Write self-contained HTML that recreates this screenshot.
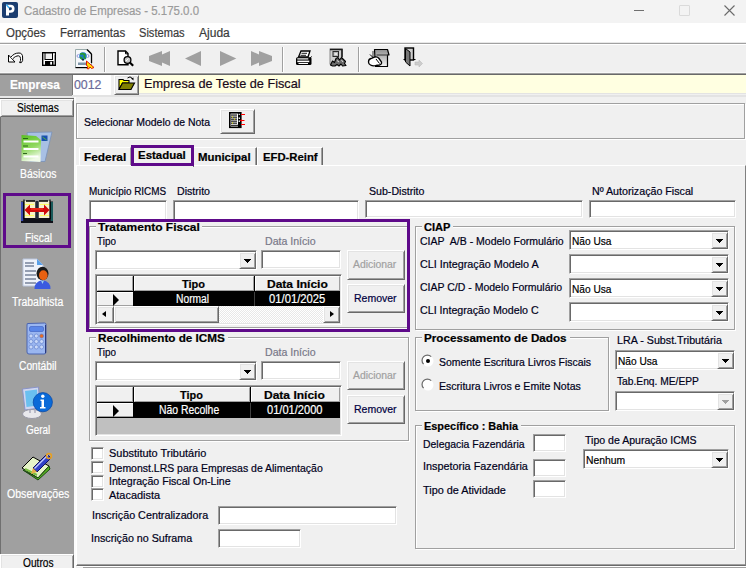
<!DOCTYPE html>
<html><head><meta charset="utf-8">
<style>
*{box-sizing:border-box;margin:0;padding:0}
html,body{width:746px;height:568px;overflow:hidden;background:#f0f0f0;font-family:"Liberation Sans",sans-serif;font-size:11px;color:#161650;position:relative}
.a{position:absolute}
.t{position:absolute;white-space:nowrap;-webkit-text-stroke:0.2px currentColor}
svg{position:absolute;overflow:visible}
</style></head><body>

<div class="a" style="left:0px;top:0px;width:746px;height:23px;background:#f3f3f3;"></div>
<svg style="left:2px;top:2px" width="16" height="16" viewBox="0 0 16 16"><rect x="0" y="0" width="16" height="16" rx="2" fill="#1b3d6f"/><path d="M4 2.7h4.5a4.05 4.05 0 0 1 0 8.1H7V13.6H4z M7 5.3v2.9h1.5a1.45 1.45 0 0 0 0-2.9z" fill="#fff"/><path d="M4.3 2.6l2.9 3.4" stroke="#3ab0f8" stroke-width="1.5"/></svg>
<div class="t" id="x1" style="left:24.00px;top:4.14px;font-size:12px;line-height:14px;color:#9b9b9b;transform:scaleX(0.9540);transform-origin:0 0;">Cadastro de Empresas - 5.175.0.0</div>
<div class="a" style="left:634px;top:10px;width:10px;height:1px;background:#6f6f6f;"></div>
<div class="a" style="left:679px;top:5px;width:11px;height:11px;border:1px solid #dadada;border-radius:1px"></div>
<svg style="left:724px;top:5px" width="11" height="11"><path d="M0.5 0.5L10.5 10.5M10.5 0.5L0.5 10.5" stroke="#6a6a6a" stroke-width="1.1"/></svg>
<div class="a" style="left:0px;top:23px;width:746px;height:19px;background:#ffffff;"></div>
<div class="t" id="x2" style="left:6.40px;top:25.54px;font-size:12px;line-height:14px;color:#3b3b3b;transform:scaleX(0.9550);transform-origin:0 0;">Opções</div>
<div class="t" id="x3" style="left:60.10px;top:25.54px;font-size:12px;line-height:14px;color:#3b3b3b;transform:scaleX(0.9584);transform-origin:0 0;">Ferramentas</div>
<div class="t" id="x4" style="left:139.20px;top:25.54px;font-size:12px;line-height:14px;color:#3b3b3b;transform:scaleX(0.9238);transform-origin:0 0;">Sistemas</div>
<div class="t" id="x5" style="left:199.00px;top:25.54px;font-size:12px;line-height:14px;color:#3b3b3b;transform:scaleX(1.0032);transform-origin:0 0;">Ajuda</div>
<div class="a" style="left:0px;top:42px;width:746px;height:1px;background:#e8e8e8;"></div>
<div class="a" style="left:0px;top:43px;width:746px;height:1px;background:#a0a0a0;"></div>
<div class="a" style="left:0px;top:44px;width:746px;height:1px;background:#ffffff;"></div>
<div class="a" style="left:0px;top:45px;width:746px;height:28px;background:#f0f0f0;"></div>
<div class="a" style="left:104px;top:47px;width:1px;height:26px;background:#a0a0a0;"></div>
<div class="a" style="left:105px;top:47px;width:1px;height:26px;background:#fff;"></div>
<div class="a" style="left:282px;top:47px;width:1px;height:26px;background:#a0a0a0;"></div>
<div class="a" style="left:283px;top:47px;width:1px;height:26px;background:#fff;"></div>
<div class="a" style="left:358px;top:47px;width:1px;height:26px;background:#a0a0a0;"></div>
<div class="a" style="left:359px;top:47px;width:1px;height:26px;background:#fff;"></div>
<div class="a" style="left:0px;top:72px;width:746px;height:1px;background:#f8f8f8;"></div>
<div class="a" style="left:0px;top:73px;width:746px;height:1px;background:#a0a0a0;"></div>
<div class="a" style="left:0px;top:74px;width:746px;height:1px;background:#696969;"></div>
<div class="a" style="left:0px;top:75px;width:72px;height:21px;background:#a0a0a0;"></div>
<div class="a" style="left:72px;top:75px;width:1px;height:20px;background:#7a7a7a;"></div>
<div class="t" id="x6" style="left:9.70px;top:76.80px;font-size:13px;line-height:15px;color:#ffffff;font-weight:bold;transform:scaleX(0.9067);transform-origin:0 0;">Empresa</div>
<div class="a" style="left:73px;top:75px;width:38px;height:20px;background:#ffffff;"></div>
<div class="t" id="x7" style="left:74.40px;top:76.80px;font-size:13px;line-height:15px;color:#6a6a9a;transform:scaleX(0.9508);transform-origin:0 0;">0012</div>
<div class="a" style="left:114px;top:75px;width:25px;height:20px;background:#f0f0f0;border:1px solid;border-color:#fff #696969 #696969 #fff;box-shadow:inset 1px 1px 0 #e3e3e3, inset -1px -1px 0 #a0a0a0"></div>
<div class="a" style="left:139px;top:75px;width:607px;height:18px;background:#ffffe1;"></div>
<div class="a" style="left:139px;top:93px;width:607px;height:1px;background:#e3e3e3;"></div>
<div class="t" id="x8" style="left:143.50px;top:75.50px;font-size:13px;line-height:15px;color:#1a0a1a;transform:scaleX(0.9777);transform-origin:0 0;">Empresa de Teste de Fiscal</div>
<div class="a" style="left:72px;top:95px;width:674px;height:2px;background:#e3e3e3;"></div>
<div class="a" style="left:0px;top:96px;width:74px;height:2px;background:#e8e8e8;"></div>
<div class="a" style="left:0px;top:98px;width:74px;height:470px;background:#a0a0a0;"></div>
<div class="a" style="left:0px;top:98px;width:1px;height:470px;background:#707070;"></div>
<div class="a" style="left:74px;top:97px;width:2px;height:471px;background:#fbfbfb;"></div>
<div class="a" style="left:0px;top:98px;width:74px;height:1px;background:#696969;"></div>
<div class="a" style="left:0px;top:99px;width:74px;height:18px;background:#f0f0f0;border:1px solid;border-color:#fff #696969 #696969 #fff;box-shadow:inset 1px 1px 0 #e3e3e3, inset -1px -1px 0 #a0a0a0"></div>
<div class="t" id="x9" style="left:16.60px;top:100.84px;font-size:12px;line-height:14px;color:#000;transform:scaleX(0.8469);transform-origin:0 0;">Sistemas</div>
<div class="t" id="x10" style="left:19.60px;top:166.84px;font-size:12px;line-height:14px;color:#fff;transform:scaleX(0.8684);transform-origin:0 0;">Básicos</div>
<div class="t" id="x11" style="left:24.60px;top:231.04px;font-size:12px;line-height:14px;color:#fff;transform:scaleX(0.8614);transform-origin:0 0;">Fiscal</div>
<div class="t" id="x12" style="left:12.10px;top:295.14px;font-size:12px;line-height:14px;color:#fff;transform:scaleX(0.8706);transform-origin:0 0;">Trabalhista</div>
<div class="t" id="x13" style="left:19.00px;top:359.34px;font-size:12px;line-height:14px;color:#fff;transform:scaleX(0.8517);transform-origin:0 0;">Contábil</div>
<div class="t" id="x14" style="left:25.90px;top:422.74px;font-size:12px;line-height:14px;color:#fff;transform:scaleX(0.8281);transform-origin:0 0;">Geral</div>
<div class="t" id="x15" style="left:6.90px;top:486.74px;font-size:12px;line-height:14px;color:#fff;transform:scaleX(0.8811);transform-origin:0 0;">Observações</div>
<div class="a" style="left:3px;top:193px;width:68px;height:55px;border:3px solid #5e0a8a"></div>
<div class="a" style="left:0px;top:554px;width:74px;height:22px;background:#f0f0f0;border:1px solid;border-color:#fff #696969 #696969 #fff;box-shadow:inset 1px 1px 0 #e3e3e3, inset -1px -1px 0 #a0a0a0"></div>
<div class="t" id="x16" style="left:22.60px;top:555.84px;font-size:12px;line-height:14px;color:#000;transform:scaleX(0.8469);transform-origin:0 0;">Outros</div>
<div class="a" style="left:77px;top:104px;width:669px;height:36px;border:1px solid #fff"></div>
<div class="a" style="left:76px;top:103px;width:669px;height:36px;border:1px solid #a0a0a0"></div>
<div class="t" id="x17" style="left:84.00px;top:115.75px;font-size:11px;line-height:13px;color:#00001a;transform:scaleX(0.9495);transform-origin:0 0;">Selecionar Modelo de Nota</div>
<div class="a" style="left:220px;top:109px;width:35px;height:25px;background:#f0f0f0;border:1px solid;border-color:#fff #696969 #696969 #fff;box-shadow:inset 1px 1px 0 #e3e3e3, inset -1px -1px 0 #a0a0a0"></div>
<div class="a" style="left:76px;top:165px;width:670px;height:401px;border:1px solid;border-color:#fff #808080 #696969 #fff;box-shadow:inset 0 -1px 0 #a0a0a0"></div>
<div class="a" style="left:77px;top:566px;width:669px;height:1px;background:#fff;"></div>
<div class="a" style="left:83px;top:567px;width:663px;height:1px;background:#a0a0a0;"></div>
<div class="a" style="left:79px;top:147px;width:52px;height:18px;background:#f0f0f0;border-left:1px solid #fff;border-top:1px solid #fff;border-right:1px solid #a0a0a0;border-top-left-radius:2px"></div>
<div class="t" id="x18" style="left:83.80px;top:151.15px;font-size:11px;line-height:13px;color:#000;font-weight:bold;transform:scaleX(1.0782);transform-origin:0 0;">Federal</div>
<div class="a" style="left:131px;top:145px;width:63px;height:22px;background:#f0f0f0;border-left:1px solid #fff;border-top:1px solid #fff;border-right:1px solid #696969"></div>
<div class="t" id="x19" style="left:138.40px;top:149.45px;font-size:11px;line-height:13px;color:#000;font-weight:bold;transform:scaleX(1.0401);transform-origin:0 0;">Estadual</div>
<div class="a" style="left:131px;top:145px;width:63px;height:21px;border:3px solid #5e0a8a"></div>
<div class="a" style="left:194px;top:147px;width:63px;height:18px;background:#f0f0f0;border-top:1px solid #fff;border-right:1px solid #696969;box-shadow:inset -1px 0 0 #a0a0a0"></div>
<div class="t" id="x20" style="left:198.40px;top:151.15px;font-size:11px;line-height:13px;color:#000;font-weight:bold;transform:scaleX(1.0368);transform-origin:0 0;">Municipal</div>
<div class="a" style="left:257px;top:147px;width:66px;height:18px;background:#f0f0f0;border-left:1px solid #fff;border-top:1px solid #fff;border-right:1px solid #696969;box-shadow:inset -1px 0 0 #a0a0a0"></div>
<div class="t" id="x21" style="left:263.00px;top:151.15px;font-size:11px;line-height:13px;color:#000;font-weight:bold;transform:scaleX(1.0269);transform-origin:0 0;">EFD-Reinf</div>
<div class="t" id="x22" style="left:88.70px;top:185.05px;font-size:11px;line-height:13px;color:#00001a;transform:scaleX(0.9009);transform-origin:0 0;">Município RICMS</div>
<div class="t" id="x23" style="left:177.00px;top:185.05px;font-size:11px;line-height:13px;color:#00001a;transform:scaleX(0.9639);transform-origin:0 0;">Distrito</div>
<div class="t" id="x24" style="left:368.60px;top:185.05px;font-size:11px;line-height:13px;color:#00001a;transform:scaleX(0.9640);transform-origin:0 0;">Sub-Distrito</div>
<div class="t" id="x25" style="left:592.00px;top:185.05px;font-size:11px;line-height:13px;color:#00001a;transform:scaleX(0.9705);transform-origin:0 0;">Nº Autorização Fiscal</div>
<div class="a" style="left:89px;top:200px;width:78px;height:21px;background:#fff;border:1px solid;border-color:#a0a0a0 #fff #fff #a0a0a0;box-shadow:inset 1px 1px 0 #696969, inset -1px -1px 0 #e3e3e3"></div>
<div class="a" style="left:173px;top:200px;width:186px;height:21px;background:#fff;border:1px solid;border-color:#a0a0a0 #fff #fff #a0a0a0;box-shadow:inset 1px 1px 0 #696969, inset -1px -1px 0 #e3e3e3"></div>
<div class="a" style="left:365px;top:200px;width:218px;height:18px;background:#fff;border:1px solid;border-color:#a0a0a0 #fff #fff #a0a0a0;box-shadow:inset 1px 1px 0 #696969, inset -1px -1px 0 #e3e3e3"></div>
<div class="a" style="left:589px;top:200px;width:147px;height:18px;background:#fff;border:1px solid;border-color:#a0a0a0 #fff #fff #a0a0a0;box-shadow:inset 1px 1px 0 #696969, inset -1px -1px 0 #e3e3e3"></div>
<div class="a" style="left:90px;top:227px;width:320px;height:102px;border:1px solid #fff"></div>
<div class="a" style="left:89px;top:226px;width:320px;height:102px;border:1px solid #a0a0a0"></div>
<div class="a" style="left:96px;top:222px;width:106px;height:9px;background:#f0f0f0"></div>
<div class="t" id="x26" style="left:98.40px;top:220.85px;font-size:11px;line-height:13px;color:#000;font-weight:bold;transform:scaleX(1.0882);transform-origin:0 0;">Tratamento Fiscal</div>
<div class="t" id="x27" style="left:97.20px;top:234.75px;font-size:11px;line-height:13px;color:#00001a;transform:scaleX(0.9000);transform-origin:0 0;">Tipo</div>
<div class="t" id="x28" style="left:264.60px;top:234.75px;font-size:11px;line-height:13px;color:#787888;transform:scaleX(0.9621);transform-origin:0 0;">Data Início</div>
<div class="a" style="left:95px;top:250px;width:162px;height:20px;background:#fff;border:1px solid;border-color:#a0a0a0 #fff #fff #a0a0a0;box-shadow:inset 1px 1px 0 #696969, inset -1px -1px 0 #e3e3e3"></div>
<div class="a" style="left:239px;top:252px;width:17px;height:17px;background:#f0f0f0;border:1px solid;border-color:#fff #696969 #696969 #fff;box-shadow:inset 1px 1px 0 #e3e3e3, inset -1px -1px 0 #a0a0a0"></div>
<div class="a" style="left:244px;top:259px;width:7px;height:1px;background:#000;"></div>
<div class="a" style="left:245px;top:260px;width:5px;height:1px;background:#000;"></div>
<div class="a" style="left:246px;top:261px;width:3px;height:1px;background:#000;"></div>
<div class="a" style="left:247px;top:262px;width:1px;height:1px;background:#000;"></div>
<div class="a" style="left:261px;top:250px;width:80px;height:19px;background:#fff;border:1px solid;border-color:#a0a0a0 #fff #fff #a0a0a0;box-shadow:inset 1px 1px 0 #696969, inset -1px -1px 0 #e3e3e3"></div>
<div class="a" style="left:347px;top:250px;width:58px;height:30px;background:#f0f0f0;border:1px solid;border-color:#fff #696969 #696969 #fff;box-shadow:inset 1px 1px 0 #e3e3e3, inset -1px -1px 0 #a0a0a0"></div>
<div class="t" id="x29" style="left:353.35px;top:258.25px;font-size:11px;line-height:13px;color:#a0a0a0;transform:scaleX(0.9442);transform-origin:0 0;">Adicionar</div>
<div class="a" style="left:347px;top:284px;width:58px;height:29px;background:#f0f0f0;border:1px solid;border-color:#fff #696969 #696969 #fff;box-shadow:inset 1px 1px 0 #e3e3e3, inset -1px -1px 0 #a0a0a0"></div>
<div class="t" id="x30" style="left:353.70px;top:292.25px;font-size:11px;line-height:13px;color:#000040;transform:scaleX(0.9546);transform-origin:0 0;">Remover</div>
<div class="a" style="left:95px;top:274px;width:247px;height:51px;background:#c0c0c0;border:1px solid;border-color:#a0a0a0 #fff #fff #a0a0a0;box-shadow:inset 1px 1px 0 #696969, inset -1px -1px 0 #e3e3e3"></div>
<div class="a" style="left:97px;top:276px;width:243px;height:30px;background:#000;"></div>
<div class="a" style="left:97px;top:276px;width:36px;height:15px;background:#f0f0f0;border:1px solid;border-color:#fff #a0a0a0 #a0a0a0 #fff"></div>
<div class="a" style="left:134px;top:276px;width:120px;height:15px;background:#f0f0f0;border:1px solid;border-color:#fff #a0a0a0 #a0a0a0 #fff"></div>
<div class="a" style="left:255px;top:276px;width:85px;height:15px;background:#f0f0f0;border:1px solid;border-color:#fff #a0a0a0 #a0a0a0 #fff"></div>
<div class="a" style="left:97px;top:292px;width:36px;height:14px;background:#f0f0f0;border-top:1px solid #fff;border-left:1px solid #fff;border-bottom:1px solid #a0a0a0"></div>
<div class="a" style="left:254px;top:292px;width:1px;height:14px;background:#404040;"></div>
<div class="a" style="left:113px;top:294px;width:0;height:0;border-top:6px solid transparent;border-bottom:6px solid transparent;border-left:6.5px solid #000"></div>
<div class="t" id="x31" style="left:181.90px;top:277.75px;font-size:11px;line-height:13px;color:#000;font-weight:bold;transform:scaleX(0.9993);transform-origin:0 0;">Tipo</div>
<div class="t" id="x32" style="left:266.90px;top:277.75px;font-size:11px;line-height:13px;color:#000;font-weight:bold;transform:scaleX(1.0930);transform-origin:0 0;">Data Início</div>
<div class="t" id="x33" style="left:176.20px;top:291.94px;font-size:12px;line-height:14px;color:#fff;transform:scaleX(0.8559);transform-origin:0 0;">Normal</div>
<div class="t" id="x34" style="left:268.50px;top:291.94px;font-size:12px;line-height:14px;color:#fff;transform:scaleX(0.9374);transform-origin:0 0;">01/01/2025</div>
<div class="a" style="left:97px;top:306px;width:243px;height:17px;background-color:#f4f4f4;background-image:repeating-conic-gradient(#fff 0 25%, #e8e8e8 0 50%);background-size:2px 2px"></div>
<div class="a" style="left:97px;top:306px;width:17px;height:17px;background:#f0f0f0;border:1px solid;border-color:#fff #696969 #696969 #fff;box-shadow:inset 1px 1px 0 #e3e3e3, inset -1px -1px 0 #a0a0a0"></div>
<div class="a" style="left:102px;top:311px;width:0;height:0;border-top:3.5px solid transparent;border-bottom:3.5px solid transparent;border-right:4px solid #000"></div>
<div class="a" style="left:114px;top:306px;width:105px;height:17px;background:#f0f0f0;border:1px solid;border-color:#fff #696969 #696969 #fff;box-shadow:inset 1px 1px 0 #e3e3e3, inset -1px -1px 0 #a0a0a0"></div>
<div class="a" style="left:323px;top:306px;width:17px;height:17px;background:#f0f0f0;border:1px solid;border-color:#fff #696969 #696969 #fff;box-shadow:inset 1px 1px 0 #e3e3e3, inset -1px -1px 0 #a0a0a0"></div>
<div class="a" style="left:330px;top:311px;width:0;height:0;border-top:3.5px solid transparent;border-bottom:3.5px solid transparent;border-left:4px solid #000"></div>
<div class="a" style="left:86px;top:219px;width:324px;height:113px;border:3px solid #5e0a8a"></div>
<div class="a" style="left:416px;top:227px;width:320px;height:104px;border:1px solid #fff"></div>
<div class="a" style="left:415px;top:226px;width:320px;height:104px;border:1px solid #a0a0a0"></div>
<div class="a" style="left:422px;top:222px;width:31px;height:9px;background:#f0f0f0"></div>
<div class="t" id="x35" style="left:424.30px;top:221.05px;font-size:11px;line-height:13px;color:#000;font-weight:bold;transform:scaleX(1.0045);transform-origin:0 0;">CIAP</div>
<div class="t" id="x36" style="left:420.40px;top:234.95px;font-size:11px;line-height:13px;color:#00001a;transform:scaleX(0.9555);transform-origin:0 0;">CIAP&nbsp; A/B - Modelo Formulário</div>
<div class="a" style="left:569px;top:230px;width:160px;height:20px;background:#fff;border:1px solid;border-color:#a0a0a0 #fff #fff #a0a0a0;box-shadow:inset 1px 1px 0 #696969, inset -1px -1px 0 #e3e3e3"></div>
<div class="a" style="left:711px;top:232px;width:17px;height:17px;background:#f0f0f0;border:1px solid;border-color:#fff #696969 #696969 #fff;box-shadow:inset 1px 1px 0 #e3e3e3, inset -1px -1px 0 #a0a0a0"></div>
<div class="a" style="left:716px;top:239px;width:7px;height:1px;background:#000;"></div>
<div class="a" style="left:717px;top:240px;width:5px;height:1px;background:#000;"></div>
<div class="a" style="left:718px;top:241px;width:3px;height:1px;background:#000;"></div>
<div class="a" style="left:719px;top:242px;width:1px;height:1px;background:#000;"></div>
<div class="t" id="x37" style="left:572.00px;top:235.25px;font-size:11px;line-height:13px;color:#000;transform:scaleX(0.9230);transform-origin:0 0;">Não Usa</div>
<div class="t" id="x38" style="left:420.40px;top:257.95px;font-size:11px;line-height:13px;color:#00001a;transform:scaleX(0.9795);transform-origin:0 0;">CLI Integração Modelo A</div>
<div class="a" style="left:569px;top:254px;width:160px;height:20px;background:#fff;border:1px solid;border-color:#a0a0a0 #fff #fff #a0a0a0;box-shadow:inset 1px 1px 0 #696969, inset -1px -1px 0 #e3e3e3"></div>
<div class="a" style="left:711px;top:256px;width:17px;height:17px;background:#f0f0f0;border:1px solid;border-color:#fff #696969 #696969 #fff;box-shadow:inset 1px 1px 0 #e3e3e3, inset -1px -1px 0 #a0a0a0"></div>
<div class="a" style="left:716px;top:263px;width:7px;height:1px;background:#000;"></div>
<div class="a" style="left:717px;top:264px;width:5px;height:1px;background:#000;"></div>
<div class="a" style="left:718px;top:265px;width:3px;height:1px;background:#000;"></div>
<div class="a" style="left:719px;top:266px;width:1px;height:1px;background:#000;"></div>
<div class="t" id="x39" style="left:420.40px;top:280.85px;font-size:11px;line-height:13px;color:#00001a;transform:scaleX(0.9547);transform-origin:0 0;">CIAP C/D - Modelo Formulário</div>
<div class="a" style="left:569px;top:278px;width:160px;height:20px;background:#fff;border:1px solid;border-color:#a0a0a0 #fff #fff #a0a0a0;box-shadow:inset 1px 1px 0 #696969, inset -1px -1px 0 #e3e3e3"></div>
<div class="a" style="left:711px;top:280px;width:17px;height:17px;background:#f0f0f0;border:1px solid;border-color:#fff #696969 #696969 #fff;box-shadow:inset 1px 1px 0 #e3e3e3, inset -1px -1px 0 #a0a0a0"></div>
<div class="a" style="left:716px;top:287px;width:7px;height:1px;background:#000;"></div>
<div class="a" style="left:717px;top:288px;width:5px;height:1px;background:#000;"></div>
<div class="a" style="left:718px;top:289px;width:3px;height:1px;background:#000;"></div>
<div class="a" style="left:719px;top:290px;width:1px;height:1px;background:#000;"></div>
<div class="t" id="x40" style="left:572.00px;top:283.25px;font-size:11px;line-height:13px;color:#000;transform:scaleX(0.9230);transform-origin:0 0;">Não Usa</div>
<div class="t" id="x41" style="left:420.40px;top:303.65px;font-size:11px;line-height:13px;color:#00001a;transform:scaleX(0.9698);transform-origin:0 0;">CLI Integração Modelo C</div>
<div class="a" style="left:569px;top:302px;width:160px;height:20px;background:#fff;border:1px solid;border-color:#a0a0a0 #fff #fff #a0a0a0;box-shadow:inset 1px 1px 0 #696969, inset -1px -1px 0 #e3e3e3"></div>
<div class="a" style="left:711px;top:304px;width:17px;height:17px;background:#f0f0f0;border:1px solid;border-color:#fff #696969 #696969 #fff;box-shadow:inset 1px 1px 0 #e3e3e3, inset -1px -1px 0 #a0a0a0"></div>
<div class="a" style="left:716px;top:311px;width:7px;height:1px;background:#000;"></div>
<div class="a" style="left:717px;top:312px;width:5px;height:1px;background:#000;"></div>
<div class="a" style="left:718px;top:313px;width:3px;height:1px;background:#000;"></div>
<div class="a" style="left:719px;top:314px;width:1px;height:1px;background:#000;"></div>
<div class="a" style="left:90px;top:338px;width:320px;height:104px;border:1px solid #fff"></div>
<div class="a" style="left:89px;top:337px;width:320px;height:104px;border:1px solid #a0a0a0"></div>
<div class="a" style="left:96px;top:333px;width:132px;height:9px;background:#f0f0f0"></div>
<div class="t" id="x42" style="left:98.20px;top:332.25px;font-size:11px;line-height:13px;color:#000;font-weight:bold;transform:scaleX(1.0647);transform-origin:0 0;">Recolhimento de ICMS</div>
<div class="t" id="x43" style="left:97.10px;top:345.55px;font-size:11px;line-height:13px;color:#00001a;transform:scaleX(0.9000);transform-origin:0 0;">Tipo</div>
<div class="t" id="x44" style="left:264.60px;top:345.75px;font-size:11px;line-height:13px;color:#787888;transform:scaleX(0.9621);transform-origin:0 0;">Data Início</div>
<div class="a" style="left:95px;top:361px;width:162px;height:20px;background:#fff;border:1px solid;border-color:#a0a0a0 #fff #fff #a0a0a0;box-shadow:inset 1px 1px 0 #696969, inset -1px -1px 0 #e3e3e3"></div>
<div class="a" style="left:239px;top:363px;width:17px;height:17px;background:#f0f0f0;border:1px solid;border-color:#fff #696969 #696969 #fff;box-shadow:inset 1px 1px 0 #e3e3e3, inset -1px -1px 0 #a0a0a0"></div>
<div class="a" style="left:244px;top:370px;width:7px;height:1px;background:#000;"></div>
<div class="a" style="left:245px;top:371px;width:5px;height:1px;background:#000;"></div>
<div class="a" style="left:246px;top:372px;width:3px;height:1px;background:#000;"></div>
<div class="a" style="left:247px;top:373px;width:1px;height:1px;background:#000;"></div>
<div class="a" style="left:261px;top:361px;width:80px;height:19px;background:#fff;border:1px solid;border-color:#a0a0a0 #fff #fff #a0a0a0;box-shadow:inset 1px 1px 0 #696969, inset -1px -1px 0 #e3e3e3"></div>
<div class="a" style="left:347px;top:361px;width:58px;height:29px;background:#f0f0f0;border:1px solid;border-color:#fff #696969 #696969 #fff;box-shadow:inset 1px 1px 0 #e3e3e3, inset -1px -1px 0 #a0a0a0"></div>
<div class="t" id="x45" style="left:353.35px;top:369.25px;font-size:11px;line-height:13px;color:#a0a0a0;transform:scaleX(0.9442);transform-origin:0 0;">Adicionar</div>
<div class="a" style="left:347px;top:395px;width:58px;height:29px;background:#f0f0f0;border:1px solid;border-color:#fff #696969 #696969 #fff;box-shadow:inset 1px 1px 0 #e3e3e3, inset -1px -1px 0 #a0a0a0"></div>
<div class="t" id="x46" style="left:353.70px;top:403.25px;font-size:11px;line-height:13px;color:#000040;transform:scaleX(0.9546);transform-origin:0 0;">Remover</div>
<div class="a" style="left:95px;top:385px;width:247px;height:51px;background:#c0c0c0;border:1px solid;border-color:#a0a0a0 #fff #fff #a0a0a0;box-shadow:inset 1px 1px 0 #696969, inset -1px -1px 0 #e3e3e3"></div>
<div class="a" style="left:97px;top:387px;width:243px;height:31px;background:#000;"></div>
<div class="a" style="left:97px;top:387px;width:36px;height:15px;background:#f0f0f0;border:1px solid;border-color:#fff #a0a0a0 #a0a0a0 #fff"></div>
<div class="a" style="left:134px;top:387px;width:116px;height:15px;background:#f0f0f0;border:1px solid;border-color:#fff #a0a0a0 #a0a0a0 #fff"></div>
<div class="a" style="left:251px;top:387px;width:89px;height:15px;background:#f0f0f0;border:1px solid;border-color:#fff #a0a0a0 #a0a0a0 #fff"></div>
<div class="a" style="left:97px;top:403px;width:36px;height:14px;background:#f0f0f0;border-top:1px solid #fff;border-left:1px solid #fff;border-bottom:1px solid #a0a0a0"></div>
<div class="a" style="left:250px;top:403px;width:1px;height:15px;background:#404040;"></div>
<div class="a" style="left:113px;top:405px;width:0;height:0;border-top:6px solid transparent;border-bottom:6px solid transparent;border-left:6.5px solid #000"></div>
<div class="t" id="x47" style="left:180.20px;top:388.75px;font-size:11px;line-height:13px;color:#000;font-weight:bold;transform:scaleX(0.9906);transform-origin:0 0;">Tipo</div>
<div class="t" id="x48" style="left:264.10px;top:388.75px;font-size:11px;line-height:13px;color:#000;font-weight:bold;transform:scaleX(1.0930);transform-origin:0 0;">Data Início</div>
<div class="t" id="x49" style="left:159.10px;top:402.74px;font-size:12px;line-height:14px;color:#fff;transform:scaleX(0.8677);transform-origin:0 0;">Não Recolhe</div>
<div class="t" id="x50" style="left:266.50px;top:402.74px;font-size:12px;line-height:14px;color:#fff;transform:scaleX(0.9240);transform-origin:0 0;">01/01/2000</div>
<div class="a" style="left:416px;top:338px;width:194px;height:74px;border:1px solid #fff"></div>
<div class="a" style="left:415px;top:337px;width:194px;height:74px;border:1px solid #a0a0a0"></div>
<div class="a" style="left:422px;top:333px;width:148px;height:9px;background:#f0f0f0"></div>
<div class="t" id="x51" style="left:424.40px;top:332.25px;font-size:11px;line-height:13px;color:#000;font-weight:bold;transform:scaleX(1.0602);transform-origin:0 0;">Processamento de Dados</div>
<div class="t" id="x52" style="left:438.60px;top:356.35px;font-size:11px;line-height:13px;color:#00001a;transform:scaleX(0.9490);transform-origin:0 0;">Somente Escritura Livros Fiscais</div>
<div class="t" id="x53" style="left:438.60px;top:379.95px;font-size:11px;line-height:13px;color:#00001a;transform:scaleX(0.9585);transform-origin:0 0;">Escritura Livros e Emite Notas</div>
<svg style="left:422px;top:355px" width="12" height="12" viewBox="0 0 12 12"><circle cx="6" cy="6" r="5.5" fill="#fff"/><path d="M1.6 9.2A5 5 0 0 1 9.2 1.6" stroke="#6a6a6a" stroke-width="1.2" fill="none"/><circle cx="6" cy="6" r="2" fill="#000"/></svg>
<svg style="left:422px;top:379px" width="12" height="12" viewBox="0 0 12 12"><circle cx="6" cy="6" r="5.5" fill="#fff"/><path d="M1.6 9.2A5 5 0 0 1 9.2 1.6" stroke="#6a6a6a" stroke-width="1.2" fill="none"/></svg>
<div class="t" id="x54" style="left:616.60px;top:333.85px;font-size:11px;line-height:13px;color:#00001a;transform:scaleX(0.9730);transform-origin:0 0;">LRA - Subst.Tributária</div>
<div class="a" style="left:615px;top:350px;width:120px;height:20px;background:#fff;border:1px solid;border-color:#a0a0a0 #fff #fff #a0a0a0;box-shadow:inset 1px 1px 0 #696969, inset -1px -1px 0 #e3e3e3"></div>
<div class="a" style="left:717px;top:352px;width:17px;height:17px;background:#f0f0f0;border:1px solid;border-color:#fff #696969 #696969 #fff;box-shadow:inset 1px 1px 0 #e3e3e3, inset -1px -1px 0 #a0a0a0"></div>
<div class="a" style="left:722px;top:359px;width:7px;height:1px;background:#000;"></div>
<div class="a" style="left:723px;top:360px;width:5px;height:1px;background:#000;"></div>
<div class="a" style="left:724px;top:361px;width:3px;height:1px;background:#000;"></div>
<div class="a" style="left:725px;top:362px;width:1px;height:1px;background:#000;"></div>
<div class="t" id="x55" style="left:618.00px;top:355.25px;font-size:11px;line-height:13px;color:#000;transform:scaleX(0.9230);transform-origin:0 0;">Não Usa</div>
<div class="t" id="x56" style="left:617.00px;top:374.65px;font-size:11px;line-height:13px;color:#00001a;transform:scaleX(0.9302);transform-origin:0 0;">Tab.Enq. ME/EPP</div>
<div class="a" style="left:615px;top:391px;width:120px;height:20px;background:#fff;border:1px solid;border-color:#a0a0a0 #fff #fff #a0a0a0;box-shadow:inset 1px 1px 0 #696969, inset -1px -1px 0 #e3e3e3"></div>
<div class="a" style="left:717px;top:393px;width:17px;height:17px;background:#f0f0f0;border:1px solid;border-color:#fff #696969 #696969 #fff;box-shadow:inset 1px 1px 0 #e3e3e3, inset -1px -1px 0 #a0a0a0"></div>
<div class="a" style="left:722px;top:400px;width:7px;height:1px;background:#a0a0a0;"></div>
<div class="a" style="left:723px;top:401px;width:5px;height:1px;background:#a0a0a0;"></div>
<div class="a" style="left:724px;top:402px;width:3px;height:1px;background:#a0a0a0;"></div>
<div class="a" style="left:725px;top:403px;width:1px;height:1px;background:#a0a0a0;"></div>
<div class="a" style="left:416px;top:426px;width:320px;height:124px;border:1px solid #fff"></div>
<div class="a" style="left:415px;top:425px;width:320px;height:124px;border:1px solid #a0a0a0"></div>
<div class="a" style="left:422px;top:422px;width:99px;height:9px;background:#f0f0f0"></div>
<div class="t" id="x57" style="left:424.10px;top:419.85px;font-size:11px;line-height:13px;color:#000;font-weight:bold;transform:scaleX(0.9930);transform-origin:0 0;">Específico : Bahia</div>
<div class="t" id="x58" style="left:422.50px;top:438.05px;font-size:11px;line-height:13px;color:#00001a;transform:scaleX(0.9485);transform-origin:0 0;">Delegacia Fazendária</div>
<div class="t" id="x59" style="left:422.50px;top:460.35px;font-size:11px;line-height:13px;color:#00001a;transform:scaleX(0.9858);transform-origin:0 0;">Inspetoria Fazendária</div>
<div class="t" id="x60" style="left:422.50px;top:484.35px;font-size:11px;line-height:13px;color:#00001a;transform:scaleX(0.9859);transform-origin:0 0;">Tipo de Atividade</div>
<div class="a" style="left:533px;top:434px;width:33px;height:18px;background:#fff;border:1px solid;border-color:#a0a0a0 #fff #fff #a0a0a0;box-shadow:inset 1px 1px 0 #696969, inset -1px -1px 0 #e3e3e3"></div>
<div class="a" style="left:533px;top:459px;width:33px;height:18px;background:#fff;border:1px solid;border-color:#a0a0a0 #fff #fff #a0a0a0;box-shadow:inset 1px 1px 0 #696969, inset -1px -1px 0 #e3e3e3"></div>
<div class="a" style="left:533px;top:480px;width:33px;height:18px;background:#fff;border:1px solid;border-color:#a0a0a0 #fff #fff #a0a0a0;box-shadow:inset 1px 1px 0 #696969, inset -1px -1px 0 #e3e3e3"></div>
<div class="t" id="x61" style="left:585.00px;top:434.45px;font-size:11px;line-height:13px;color:#00001a;transform:scaleX(0.9588);transform-origin:0 0;">Tipo de Apuração ICMS</div>
<div class="a" style="left:583px;top:449px;width:146px;height:20px;background:#fff;border:1px solid;border-color:#a0a0a0 #fff #fff #a0a0a0;box-shadow:inset 1px 1px 0 #696969, inset -1px -1px 0 #e3e3e3"></div>
<div class="a" style="left:711px;top:451px;width:17px;height:17px;background:#f0f0f0;border:1px solid;border-color:#fff #696969 #696969 #fff;box-shadow:inset 1px 1px 0 #e3e3e3, inset -1px -1px 0 #a0a0a0"></div>
<div class="a" style="left:716px;top:458px;width:7px;height:1px;background:#000;"></div>
<div class="a" style="left:717px;top:459px;width:5px;height:1px;background:#000;"></div>
<div class="a" style="left:718px;top:460px;width:3px;height:1px;background:#000;"></div>
<div class="a" style="left:719px;top:461px;width:1px;height:1px;background:#000;"></div>
<div class="t" id="x62" style="left:586.00px;top:454.25px;font-size:11px;line-height:13px;color:#000;transform:scaleX(0.9404);transform-origin:0 0;">Nenhum</div>
<div class="a" style="left:91px;top:447px;width:13px;height:13px;background:#fff;border:1px solid;border-color:#a0a0a0 #fff #fff #a0a0a0;box-shadow:inset 1px 1px 0 #696969, inset -1px -1px 0 #e3e3e3"></div>
<div class="t" id="x63" style="left:108.50px;top:446.75px;font-size:11px;line-height:13px;color:#00001a;transform:scaleX(0.9944);transform-origin:0 0;">Substituto Tributário</div>
<div class="a" style="left:91px;top:461px;width:13px;height:13px;background:#fff;border:1px solid;border-color:#a0a0a0 #fff #fff #a0a0a0;box-shadow:inset 1px 1px 0 #696969, inset -1px -1px 0 #e3e3e3"></div>
<div class="t" id="x64" style="left:108.50px;top:461.95px;font-size:11px;line-height:13px;color:#00001a;transform:scaleX(0.9524);transform-origin:0 0;">Demonst.LRS para Empresas de Alimentação</div>
<div class="a" style="left:91px;top:475px;width:13px;height:13px;background:#fff;border:1px solid;border-color:#a0a0a0 #fff #fff #a0a0a0;box-shadow:inset 1px 1px 0 #696969, inset -1px -1px 0 #e3e3e3"></div>
<div class="t" id="x65" style="left:108.50px;top:475.05px;font-size:11px;line-height:13px;color:#00001a;transform:scaleX(0.9662);transform-origin:0 0;">Integração Fiscal On-Line</div>
<div class="a" style="left:91px;top:488px;width:13px;height:13px;background:#fff;border:1px solid;border-color:#a0a0a0 #fff #fff #a0a0a0;box-shadow:inset 1px 1px 0 #696969, inset -1px -1px 0 #e3e3e3"></div>
<div class="t" id="x66" style="left:108.50px;top:488.75px;font-size:11px;line-height:13px;color:#00001a;transform:scaleX(0.9946);transform-origin:0 0;">Atacadista</div>
<div class="t" id="x67" style="left:91.60px;top:509.45px;font-size:11px;line-height:13px;color:#00001a;transform:scaleX(0.9796);transform-origin:0 0;">Inscrição Centralizadora</div>
<div class="t" id="x68" style="left:91.00px;top:532.05px;font-size:11px;line-height:13px;color:#00001a;transform:scaleX(0.9737);transform-origin:0 0;">Inscrição no Suframa</div>
<div class="a" style="left:218px;top:506px;width:179px;height:19px;background:#fff;border:1px solid;border-color:#a0a0a0 #fff #fff #a0a0a0;box-shadow:inset 1px 1px 0 #696969, inset -1px -1px 0 #e3e3e3"></div>
<div class="a" style="left:218px;top:529px;width:83px;height:19px;background:#fff;border:1px solid;border-color:#a0a0a0 #fff #fff #a0a0a0;box-shadow:inset 1px 1px 0 #696969, inset -1px -1px 0 #e3e3e3"></div>
<svg style="left:6px;top:50px" width="20" height="16" viewBox="0 0 20 16"><path d="M2.5 5 L2.5 12 L9 12 Z" fill="#fff" stroke="#000" stroke-width="1" stroke-linejoin="miter"/><path d="M4.8 7.2 C7 4.5 9.5 3 13 3 C15.5 3 16.6 4.8 16.6 7 L16.6 10.5 L15.4 12.6 L13.6 12.6 L14.6 10.4 C14.6 7.4 14 5.8 12.5 5.8 C10.5 5.8 8.5 6.8 6.8 8.8" fill="#fff" stroke="#000" stroke-width="1"/></svg>
<svg style="left:42px;top:52px" width="14" height="14" viewBox="0 0 14 14"><rect x="0.7" y="0.7" width="12.6" height="12.6" fill="#fff" stroke="#000" stroke-width="1.4"/><rect x="3" y="1" width="7.5" height="6.5" fill="#f0f0f0" stroke="#000" stroke-width="1"/><rect x="3" y="9" width="8.5" height="4.3" fill="#000"/><rect x="8.2" y="9.8" width="1.8" height="2.8" fill="#fff"/><rect x="11.3" y="1.3" width="1.4" height="1.4" fill="#fff"/></svg>
<svg style="left:75px;top:49px" width="19" height="20" viewBox="0 0 19 20"><path d="M0.5 0.5 H12 L16.5 5 V18.5 H0.5 Z" fill="#f6f8fb" stroke="#9aa" stroke-width="1"/><path d="M12 0.5 L16.5 5" stroke="#000" stroke-width="1.4"/><path d="M16.5 5 V14" stroke="#000" stroke-width="1.3"/><path d="M0.5 18.6 H12" stroke="#000" stroke-width="1.2"/><circle cx="8" cy="7" r="3.8" fill="#1a7ac8"/><path d="M5.2 5.2 Q8 3.6 9.8 5.8 Q8.2 8 10.8 9.8 M5 8 Q6.5 9 7.5 10.5" stroke="#2a9a2a" stroke-width="1.7" fill="none"/><circle cx="8" cy="10.8" r="1" fill="#102040"/><path d="M3.5 5 L1.8 7 L3.5 9 M12.5 5 L14.2 7 L12.5 9" stroke="#8a8ad8" stroke-width="1" fill="none"/><rect x="3" y="13.5" width="9" height="2.5" fill="#7f95a8"/><path d="M11.5 12 L19 18.5 L16.5 19.5 L15 18 L13.5 20 L12 19.5 L13 17.5 L11.5 16.5 Z" fill="#ffe000" stroke="#e01800" stroke-width="1"/></svg>
<svg style="left:117px;top:50px" width="18" height="17" viewBox="0 0 18 17"><path d="M1 1 H8.5 L11 3.5 V14.8 H1 Z" fill="#fff" stroke="#000" stroke-width="1.4"/><path d="M8.5 1 V3.8 H11" stroke="#000" stroke-width="1" fill="none"/><circle cx="10.5" cy="10" r="3.4" fill="#c8c8c8" stroke="#000" stroke-width="1.3"/><path d="M9 11 L11.5 8.5" stroke="#fff" stroke-width="1"/><path d="M12.8 12.5 L16.2 15.8" stroke="#000" stroke-width="2.2"/></svg>
<svg style="left:149px;top:51px" width="22" height="16" viewBox="0 0 22 16"><path d="M0 5 L13 0 L13 3.5 L21 0 L21 15 L13 11.5 L13 15 L0 10 Z" fill="#a0a0a0"/></svg>
<svg style="left:185px;top:51px" width="17" height="16" viewBox="0 0 17 16"><path d="M0 7.5 L16 0 L16 15 Z" fill="#a0a0a0"/></svg>
<svg style="left:220px;top:51px" width="17" height="16" viewBox="0 0 17 16"><path d="M16.3 7.5 L0 0 L0 15 Z" fill="#a0a0a0"/></svg>
<svg style="left:251px;top:51px" width="22" height="16" viewBox="0 0 22 16"><path d="M21 5 L8 0 L8 3.5 L0 0 L0 15 L8 11.5 L8 15 L21 10 Z" fill="#a0a0a0"/></svg>
<svg style="left:295px;top:50px" width="18" height="16" viewBox="0 0 18 16"><path d="M6 1 H15 L13 7 H3.5 Z" fill="#fff" stroke="#000" stroke-width="1.3"/><path d="M6.5 3.3 H12 M5.5 5.3 H11" stroke="#000" stroke-width="0.9"/><rect x="1" y="7.3" width="15.5" height="7.8" rx="1.5" fill="#000"/><rect x="2.3" y="8.3" width="11" height="1.2" fill="#fff"/><rect x="2.3" y="10.6" width="12" height="1.6" fill="#fff"/><rect x="3.5" y="13" width="9.5" height="1" fill="#fff"/><path d="M14.5 8.5 L16.8 6.5" stroke="#000" stroke-width="1"/></svg>
<svg style="left:329px;top:48px" width="18" height="19" viewBox="0 0 18 19"><rect x="1" y="1" width="12" height="15" fill="#cfcfcf" stroke="#8a8a8a" stroke-width="1"/><path d="M1 1.5 H13 V9" stroke="#1a1a1a" stroke-width="1.6" fill="none"/><rect x="4" y="3.5" width="5.5" height="5" fill="#b8b8b8" stroke="#2a2a2a" stroke-width="1"/><rect x="5.5" y="5" width="2.5" height="2" fill="#e8e8e8"/><path d="M1.5 17 L3.5 13 L5.5 14.5 L7 10.5 L9 9.5 L10.5 12 L12.5 9.5 L14.5 11.5 L16.5 13.5 L15.5 15.5 L17 17.5 L13.5 18 L12 16 L10 18 L8 16.5 L6 18 L3.5 18 Z" fill="#6a6a6a" stroke="#000" stroke-width="1.1" stroke-linejoin="round"/><path d="M8 12.5 L10 14 M12.5 12 L14 14" stroke="#ddd" stroke-width="1"/></svg>
<svg style="left:367px;top:47px" width="23" height="22" viewBox="0 0 23 22"><defs><linearGradient id="gn" x1="0" y1="0" x2="0" y2="1"><stop offset="0" stop-color="#909090"/><stop offset="1" stop-color="#f4f4f4"/></linearGradient></defs><path d="M7.5 2.5 H20.5 L22 8 H20.5 V19.5 H8.5 Z" fill="url(#gn)" stroke="#000" stroke-width="1.2" stroke-linejoin="round"/><path d="M8 3 L9 2 L10 3 L11 2 L12 3 L13 2 L14 3 L15 2 L16 3 L17 2 L18 3 L19 2 L20 3" stroke="#000" stroke-width="0.9" fill="none"/><path d="M9.5 8 H21" stroke="#333" stroke-width="1"/><path d="M6 4 V11" stroke="#555" stroke-width="1.2"/><path d="M1.5 15 Q1.5 12 4 11.5 L8 10 Q10.5 9.5 12 11.5 L14.5 15 Q15 17.5 12.5 18 L9 18.5 Q6 19.5 3.5 18 Q1.5 17 1.5 15 Z" fill="#fff" stroke="#000" stroke-width="1.3"/><path d="M9 12 L12.5 16.5" stroke="#000" stroke-width="1"/><path d="M3 7.5 L6.5 11" stroke="#000" stroke-width="1"/></svg>
<svg style="left:403px;top:47px" width="20" height="22" viewBox="0 0 20 22"><rect x="2" y="1" width="8.5" height="12" fill="#ccc" stroke="#000" stroke-width="1.4"/><path d="M2.5 1.5 L7 5 L7 19 L2.5 15 Z" fill="#777" stroke="#000" stroke-width="1"/><path d="M0.5 12.5 H2.5 M10 12.5 H12.5" stroke="#000" stroke-width="1.2"/><path d="M12 18 L16 18 L16 20 L19.5 16.5 L16 13 L16 15 L12 15 Z" fill="#ccc" stroke="#bbb" stroke-width="0.6"/></svg>
<svg style="left:118px;top:76px" width="18" height="15" viewBox="0 0 18 15"><path d="M1 3.5 H5 L6 4.5 H11 V7 H4.5 L1 13.5 Z" fill="#ffff00" stroke="#000" stroke-width="1.1"/><path d="M1 13.5 L4.5 7 H16.5 L13 13.5 Z" fill="#808000" stroke="#000" stroke-width="1.1"/><path d="M9.5 2 Q12 -0.5 14.5 2.5" stroke="#000" stroke-width="1" fill="none"/><path d="M13 2.5 L15.5 4.5 L15.5 1.5 Z" fill="#000"/></svg>
<svg style="left:229px;top:112px" width="17" height="17" viewBox="0 0 17 17"><rect x="0.8" y="0.8" width="11" height="14.5" fill="#fff" stroke="#000" stroke-width="1.6"/><rect x="9" y="0.8" width="2.8" height="14.5" fill="#000"/><rect x="9.6" y="1.8" width="1.4" height="1" fill="#fff"/><rect x="9.6" y="5.5" width="1.4" height="1.4" fill="#fff"/><rect x="9.6" y="8.5" width="1.4" height="1.4" fill="#fff"/><rect x="2" y="2.5" width="6" height="1.1" fill="#000"/><rect x="2" y="4.6" width="6" height="1.1" fill="#000"/><rect x="2" y="6.6" width="6" height="1.1" fill="#000"/><rect x="2" y="8.6" width="6" height="1.1" fill="#000"/><rect x="2" y="10.6" width="6" height="1.1" fill="#000"/><rect x="3" y="4.5" width="1" height="1" fill="#ff0"/><rect x="5" y="6.5" width="1" height="1" fill="#ff0"/><rect x="3" y="10.5" width="1" height="1" fill="#ff0"/><rect x="2" y="12.8" width="8" height="1" fill="#000"/><path d="M12 2.5 H16 M11.5 8.5 H15.5 M12 12.5 H16" stroke="#f00" stroke-width="1.2"/><path d="M11 8.5 L13 7 L13 10 Z" fill="#f00"/></svg>
<svg style="left:20px;top:130px" width="34" height="34" viewBox="0 0 34 34"><defs><linearGradient id="gb" x1="0" y1="0" x2="0.3" y2="1"><stop offset="0" stop-color="#58c020"/><stop offset="0.55" stop-color="#90d860"/><stop offset="1" stop-color="#f0fae8"/></linearGradient></defs><path d="M7 2.5 L32 2 L25 31.5 L10 31.5 Z" fill="#a8c0e4" stroke="#7890b8" stroke-width="0.8"/><rect x="21.5" y="5.5" width="6" height="5.5" fill="#1850b0"/><path d="M22.5 7 L26.5 10" stroke="#50b040" stroke-width="1"/><path d="M1.5 5 L16 6 L21 10 L20.5 32 L1.5 31 Z" fill="url(#gb)"/><path d="M3.5 11.5 H18.5 M3.5 19 H18.5 M3.5 26.5 H18.5" stroke="#fff" stroke-width="1.8"/><path d="M3 8.5 H8 M3 16 H8 M3 23.5 H7" stroke="#205a10" stroke-width="0.9"/></svg>
<svg style="left:21px;top:198px" width="32" height="25" viewBox="0 0 32 25"><rect x="0" y="3.5" width="32" height="21.5" fill="#101018"/><rect x="0" y="4" width="2.2" height="19" fill="#3a48b0"/><rect x="29.8" y="4" width="2.2" height="19" fill="#1a5a5a"/><path d="M3 3 H14.5 V20 H3 Z" fill="#f8f2c8"/><path d="M17.5 3 H29 V20 H17.5 Z" fill="#f4f0d0"/><path d="M3 1.5 V21 M29 1.5 V21" stroke="#000" stroke-width="1.2"/><path d="M5 3 H14 M18 3 H27" stroke="#000" stroke-width="1.4"/><path d="M4 6.5 H13 M4 17.5 H13 M19 6.5 H28 M19 17.5 H28" stroke="#ffff60" stroke-width="1"/><path d="M14.5 3 H17.5 V21 H14.5 Z" fill="#202838"/><path d="M3.5 12 L9 6.5 V10 H23 V6.5 L28.5 12 L23 17.5 V14 H9 V17.5 Z" fill="#d00a0a"/><path d="M10 11 H22" stroke="#ff4020" stroke-width="1"/></svg>
<svg style="left:22px;top:258px" width="31" height="33" viewBox="0 0 31 33"><path d="M1 1 H15 L21 7 V28 H1 Z" fill="#eef2fa" stroke="#b8c4dc" stroke-width="1"/><path d="M15 1 L21 7 H15 Z" fill="#5aa0e8"/><path d="M3 5 H12 M3 8 H12 M3 13 H14 M3 17 H14 M3 21 H14 M3 25 H14" stroke="#3a4a6a" stroke-width="1.2"/><path d="M12.5 31 Q12 24 20.5 22 Q29 24 28.5 31 Z" fill="#3a5ae0"/><path d="M19 22.5 L20.5 26 L22 22.5" fill="#9ad0f0"/><ellipse cx="20.5" cy="15.5" rx="6" ry="6.8" fill="#1a1a1a"/><ellipse cx="21.3" cy="17.3" rx="4.3" ry="5" fill="#e86010"/></svg>
<svg style="left:25px;top:322px" width="23" height="34" viewBox="0 0 23 34"><path d="M3 1.5 Q2 1 2 3 V30 Q2 32 4 32 H19 Q21 32 21 30 V2.5 Q21 1 19.5 1 Z" fill="#9ab6f0" stroke="#4a64b0" stroke-width="1"/><rect x="4.5" y="4.5" width="14" height="5" rx="1.5" fill="#5a86e8" stroke="#3a5cc0" stroke-width="0.6"/><circle cx="6.0" cy="14.0" r="2" fill="#c8d8f8" stroke="#5a78c8" stroke-width="0.6"/><circle cx="11.3" cy="14.0" r="2" fill="#c8d8f8" stroke="#5a78c8" stroke-width="0.6"/><circle cx="16.6" cy="14.0" r="2" fill="#e86a20" stroke="#5a78c8" stroke-width="0.6"/><circle cx="6.0" cy="19.5" r="2" fill="#c8d8f8" stroke="#5a78c8" stroke-width="0.6"/><circle cx="11.3" cy="19.5" r="2" fill="#c8d8f8" stroke="#5a78c8" stroke-width="0.6"/><circle cx="16.6" cy="19.5" r="2" fill="#c8d8f8" stroke="#5a78c8" stroke-width="0.6"/><circle cx="6.0" cy="25.0" r="2" fill="#c8d8f8" stroke="#5a78c8" stroke-width="0.6"/><circle cx="11.3" cy="25.0" r="2" fill="#c8d8f8" stroke="#5a78c8" stroke-width="0.6"/><circle cx="16.6" cy="25.0" r="2" fill="#c8d8f8" stroke="#5a78c8" stroke-width="0.6"/><path d="M20.5 3 V31" stroke="#2a3a80" stroke-width="1"/></svg>
<svg style="left:21px;top:386px" width="32" height="33" viewBox="0 0 32 33"><path d="M1.5 3 L17.5 1 L19 22 L4 24 Z" fill="#cfd6f0" stroke="#8a94c8" stroke-width="1"/><path d="M4 5 L16 3.5 L17 19.5 L5.5 21 Z" fill="#6ac0f0"/><ellipse cx="11" cy="28" rx="9.5" ry="4.5" fill="#e8e8ec" stroke="#9a9aa8" stroke-width="1"/><path d="M9 24 V27 M14 23.5 V27" stroke="#aab" stroke-width="1.5"/><circle cx="21.8" cy="16.2" r="9.6" fill="#0a6ad8" stroke="#0a4aa8" stroke-width="0.8"/><circle cx="21.8" cy="10.3" r="1.7" fill="#fff"/><path d="M19.5 13.5 H23 V21 H24.5 V22.5 H19 V21 H20.5 V15 H19.5 Z" fill="#fff"/></svg>
<svg style="left:21px;top:450px" width="33" height="34" viewBox="0 0 33 34"><path d="M1 18 L12 7 L28 16 L17 28 Z" fill="#e6f4c8" stroke="#000" stroke-width="1"/><path d="M2 20 L17 30 L29 19 L28 16 L17 28 Z" fill="#58b020" stroke="#1a4a10" stroke-width="1"/><path d="M4 19 L16 25" stroke="#7ac040" stroke-width="2"/><path d="M12 18 L26 4 L30 8 L16 22 Z" fill="#3040c8" stroke="#101060" stroke-width="1"/><path d="M13.5 18.5 L27 5" stroke="#c8d0ff" stroke-width="1.2"/><path d="M12 18 L10 24 L16 22 Z" fill="#e8b048"/><circle cx="28" cy="6" r="2.5" fill="none" stroke="#e8a020" stroke-width="1.5"/></svg>
</body></html>
